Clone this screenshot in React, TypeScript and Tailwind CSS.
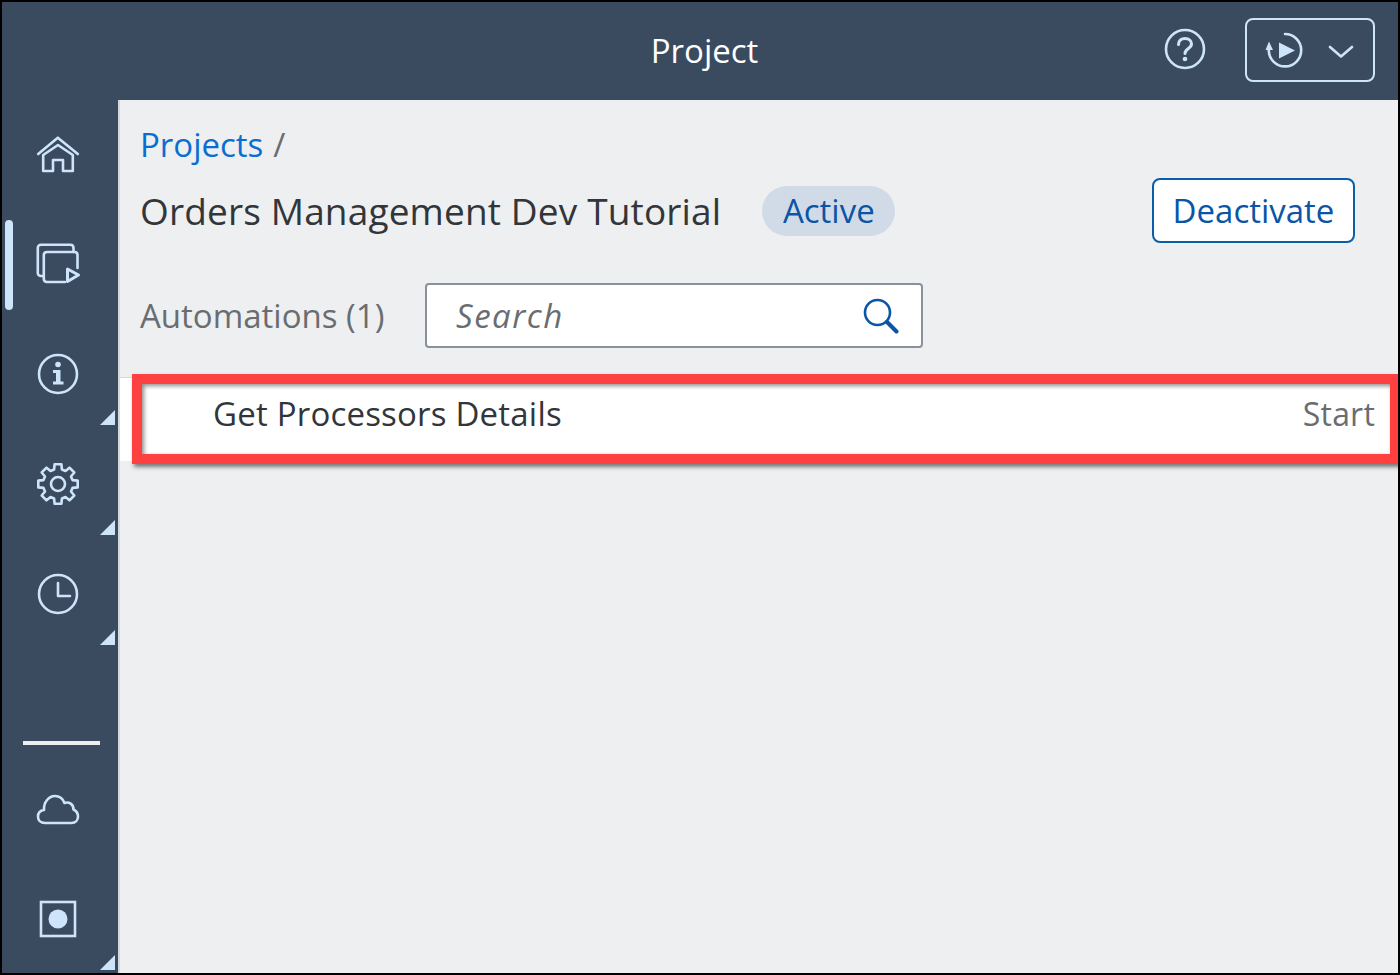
import type { ReactNode } from 'react';

const stroke = {
  fill: 'none',
  stroke: '#cde4fb',
  strokeWidth: 2.6,
  strokeLinecap: 'round' as const,
  strokeLinejoin: 'round' as const,
};

// eight rounded teeth round the centre of the 44 box
function gearPath() {
  const pts: string[] = [];
  for (let i = 0; i < 8; i++) {
    const a = (i * Math.PI) / 4 - Math.PI / 2;
    const at = (r: number, d: number) =>
      `${(22 + r * Math.cos(a + d)).toFixed(1)} ${(22 + r * Math.sin(a + d)).toFixed(1)}`;
    pts.push(`${i === 0 ? 'M' : 'L'}${at(15, -0.26)}`, `L${at(20, -0.17)}`, `L${at(20, 0.17)}`, `L${at(15, 0.26)}`);
  }
  return pts.join(' ') + 'Z';
}

function Corner() {
  return (
    <svg className="absolute right-[3px] bottom-[5px]" width="15" height="15" viewBox="0 0 15 15">
      <path d="M15 0V15H0Z" fill="#cde4fb" />
    </svg>
  );
}

function NavItem({ children, corner }: { children: ReactNode; corner?: boolean }) {
  return (
    <div className="relative flex h-[110px] shrink-0 items-center justify-center pr-[5px] pb-[2px]">
      <svg width="44" height="44" viewBox="0 0 44 44" className="overflow-visible">
        {children}
      </svg>
      {corner && <Corner />}
    </div>
  );
}

function Sidebar() {
  return (
    <aside className="relative flex w-[116px] shrink-0 flex-col bg-[#3a4b5f]">
      <div className="absolute left-[3px] top-[120px] h-[90px] w-2 rounded-full bg-[#cde4fb]" />
      <NavItem>
        <path {...stroke} d="M2.200 22L21.800 5.700L41.800 22" />
        <path {...stroke} d="M7.200 39V23L22 13L36.800 23V39H27V28H17V39Z" />
      </NavItem>
      <NavItem>
        <path {...stroke} d="M7 34H5C3 34 1.800 32.800 1.800 31V6C1.800 4 3 2.800 5 2.800H34.500C36.500 2.800 37.500 4 37.500 6V10" />
        <path {...stroke} d="M29 40H11C9 40 7.800 39 7.800 37V13C7.800 11 9 10 11 10H38.500C40.500 10 41.500 11 41.500 13V26" />
        <path {...stroke} strokeWidth="3" d="M31.500 27L42.500 33L31.500 39.500Z" />
      </NavItem>
      <NavItem corner>
        <circle {...stroke} cx="22" cy="22" r="19" />
        <circle cx="22" cy="12.500" r="2.800" fill="#cde4fb" />
        <path d="M17 18H24.500V29.500H27.500V32.500H17V29.500H20V21H17Z" fill="#cde4fb" />
      </NavItem>
      <NavItem corner>
        <path {...stroke} d={gearPath()} />
        <circle {...stroke} cx="22" cy="22" r="7" />
      </NavItem>
      <NavItem corner>
        <circle {...stroke} cx="22" cy="22" r="19" />
        <path {...stroke} d="M22 11V24H34" />
      </NavItem>
      <div className="mx-auto mt-[91px] mb-[10px] h-1 w-[77px] shrink-0 translate-x-[1px] bg-[#eeeeee]" />
      <NavItem>
        <path
          {...stroke}
          d="M9 36C4.500 36 2 33 2 29.500C2 26 4.500 23.500 8 23C7.500 15 13 9 19 9C24 9 27 12 28.500 16C33 14.500 37.500 17 37.500 22.500C40.500 24 42 26.500 42 29.500C42 33 39.500 36 35.500 36Z"
        />
      </NavItem>
      <NavItem corner>
        <rect {...stroke} x="5" y="5" width="34" height="34" strokeLinejoin="miter" />
        <circle cx="22" cy="22" r="9.500" fill="#cde4fb" />
      </NavItem>
    </aside>
  );
}

export default function App() {
  return (
    <div className="flex h-[975px] w-[1400px] flex-col overflow-hidden border-2 border-black font-['Open_Sans',sans-serif]">
      <header className="relative flex h-[98px] shrink-0 items-center justify-center bg-[#3a4b5f] pl-[9px]">
        <h1 className="text-[33px] text-white">Project</h1>
        <div className="absolute right-[23px] top-[16px] flex items-center gap-[39px]">
          <svg className="-mt-[3px]" width="42" height="42" viewBox="0 0 42 42">
            <circle {...stroke} cx="21" cy="21" r="19" />
            <path {...stroke} strokeWidth="3" d="M14.500 16.500C14.500 12.500 17.500 10.500 21 10.500C25 10.500 27.500 13 27.500 16C27.500 20.500 21 20.500 21 25.500" />
            <circle cx="21" cy="31" r="2.300" fill="#cde4fb" />
          </svg>
          <button className="flex h-[64px] w-[130px] items-center rounded-lg border-2 border-[#cde4fb] pl-[18px]">
            <svg width="40" height="38" viewBox="0 0 40 38">
              <path {...stroke} d="M20 3A16.200 16.200 0 1 1 3.800 19.500" />
              <path d="M0.500 19L4 10.500L8 19Z" fill="#cde4fb" />
              <path d="M14 11.500L30 19.500L14 27.500Z" fill="#cde4fb" />
            </svg>
            <svg className="ml-[23px]" width="26" height="16" viewBox="0 0 26 16">
              <path {...stroke} d="M2 5L13 14.500L24 5" />
            </svg>
          </button>
        </div>
      </header>

      <div className="flex min-h-0 flex-1 overflow-hidden">
        <Sidebar />
        <main className="flex min-w-0 flex-1 flex-col border-l-2 border-[#d5d9dd] bg-[#edeff1] text-[#32363a]">
          <div className="flex h-[45px] items-center gap-[10px] pl-[20px] pt-[45px] text-[33px]">
            <a className="text-[#0a6ed1]">Projects</a>
            <span className="text-[#6a6d70]">/</span>
          </div>
          <div className="mt-[33px] flex h-[65px] items-center pl-[20px] pr-[43px]">
            <h2 className="text-[37px] tracking-[0.15px]">Orders Management Dev Tutorial</h2>
            <span className="ml-[41px] flex h-[50px] w-[133px] items-center justify-center rounded-full bg-[#d1dbe8] text-[33px] text-[#0a55a5]">
              Active
            </span>
            <button className="ml-auto h-[65px] w-[203px] rounded-lg border-2 border-[#0a5ea8] bg-white text-[33px] text-[#0a55a5]">
              Deactivate
            </button>
          </div>
          <div className="mt-[40px] flex items-center pl-[20px]">
            <span className="w-[285px] text-[33px] text-[#6a6d70]">Automations (1)</span>
            <div className="flex h-[65px] w-[498px] items-center justify-between rounded border-2 border-[#89919a] bg-white pl-[29px] pr-[22px]">
              <span className="text-[33px] tracking-[1.500px] text-[#6a6d70] italic">Search</span>
              <svg width="36" height="36" viewBox="0 0 36 36">
                <circle cx="14.500" cy="14.500" r="12.500" fill="none" stroke="#0a55a5" strokeWidth="2.600" />
                <path d="M24 24L33.500 33.500" fill="none" stroke="#0a55a5" strokeWidth="4" strokeLinecap="round" />
              </svg>
            </div>
          </div>
          <div className="relative mt-[29px] flex h-[84px] items-center justify-between border-t border-[#d9d9d9] bg-white pb-[12px] pl-[93px] pr-[23px]">
            <span className="text-[33px] tracking-[0.2px]">Get Processors Details</span>
            <span className="text-[32px] tracking-[0.2px] text-[#6a6d70]">Start</span>
            <div className="absolute left-[12px] right-[-2px] top-[-4px] h-[90px] border-[10px] border-[#ff4040] shadow-[2px_3px_4px_rgba(0,0,0,0.5),inset_2px_2px_4px_rgba(0,0,0,0.45)]" />
          </div>
        </main>
      </div>
    </div>
  );
}
